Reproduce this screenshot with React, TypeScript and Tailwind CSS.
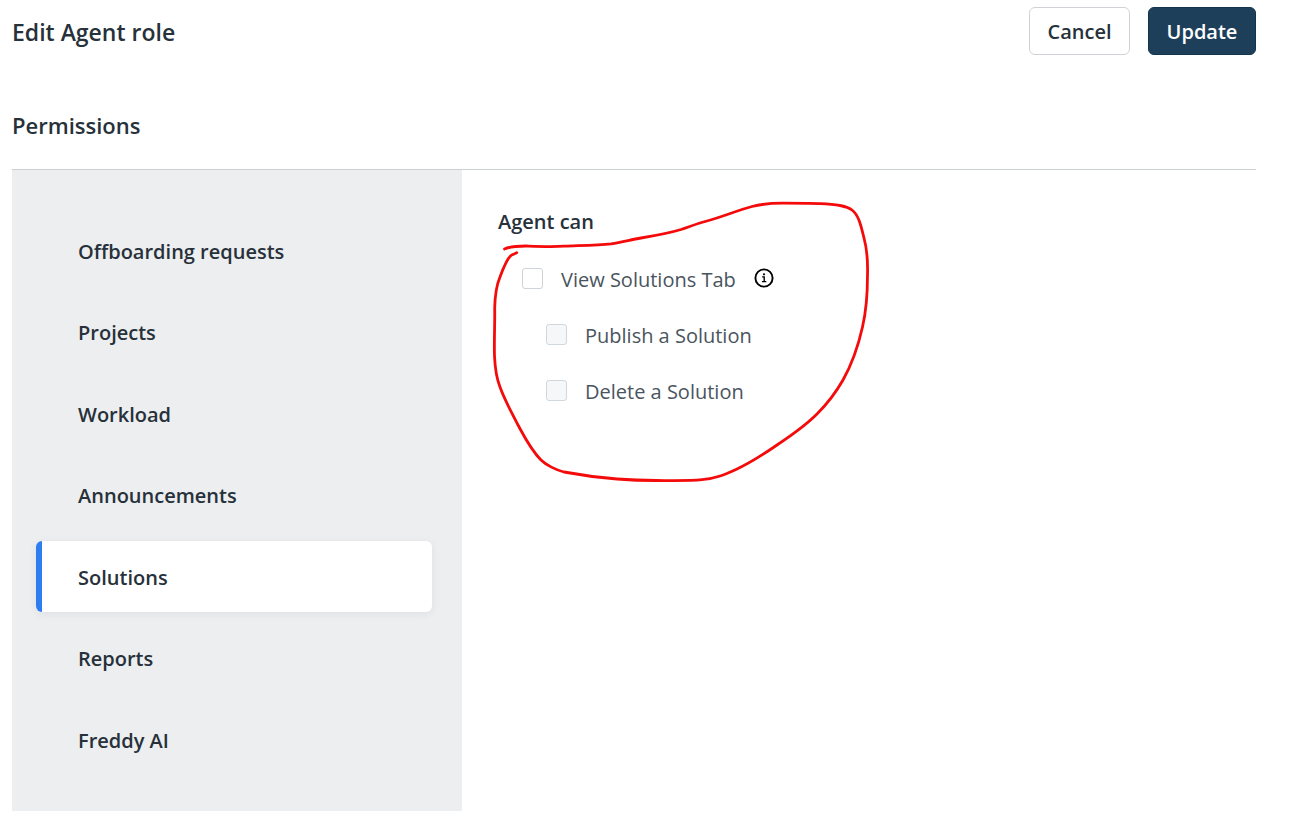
import React from 'react';

const sections = [
  'Offboarding requests',
  'Projects',
  'Workload',
  'Announcements',
  'Solutions',
  'Reports',
  'Freddy AI',
];

function InfoIcon() {
  return (
    <svg viewBox="0 0 20 20" className="size-5" fill="none" stroke="#000" aria-hidden="true">
      <circle cx="10" cy="10" r="8.6" strokeWidth="1.9" />
      <path d="M8.1 8.9h2.1v4.6M7.9 13.6h4.4" strokeWidth="1.4" />
      <circle cx="10" cy="6.3" r="1.1" fill="#000" stroke="none" />
    </svg>
  );
}

function HandDrawnLoop() {
  return (
    <svg
      viewBox="488 198 386 290"
      className="pointer-events-none absolute top-7 left-[26px] h-[290px] w-[386px]"
      fill="none"
      stroke="#f40a0a"
      strokeWidth="2.8"
      strokeLinecap="round"
      strokeLinejoin="round"
      aria-hidden="true"
    >
      <path d="M504.500 249C510 246.500 517 246 526 246C540 246.500 552 247 564 246.200C580 245.500 598 245.300 611 243.800C622 242 630 240 641 238C656 235.500 668 233.500 681 229.500C690 226.500 697 223.500 707 221C722 217 737 210.500 752 206.500C762 203.800 772 203.200 783 203.200C796 203.200 808 203.400 820 203.600C836 204.300 846 205.500 852 210C859 215.500 861 226 864 238C867 249 868 258 867.500 275C867.500 295 866 312 862.500 327C858 347 852 364 843 380C835 394 826 405 817 414C806 425 792 435 777 445C764 454 751 462.500 736 469.500C725 474.500 716 478.500 702 479.700C690 481 675 480.600 656 480.500C641 480.500 630 480 617 479C598 477.500 580 475 564 472C556 470 546 465 541 460C531 450 525 438 518 425C512 413 505 401 500 387C496 377 495 367 494.500 356C494 340 495 322 494.700 308C495 295 497 284 500 277C504 266 507 259 511 255.500C513 254 515 254 516.800 252.700" />
    </svg>
  );
}

function Permission({
  id,
  label,
  disabled = false,
  children,
}: {
  id: string;
  label: string;
  disabled?: boolean;
  children?: React.ReactNode;
}) {
  return (
    <div className={disabled ? 'flex h-7 items-start pl-12' : 'flex h-7 items-start pl-6'}>
      <input
        id={id}
        type="checkbox"
        disabled={disabled}
        className="mt-0.5 size-[21px] shrink-0 appearance-none rounded-[3px] border border-[#cfd3da] bg-white checked:bg-[#2c7be5] disabled:border-[#cfd7df] disabled:bg-[#f5f7f9]"
      />
      <label htmlFor={id} className="pl-[18px] text-xl leading-7 text-[#4a545e]">
        {label}
      </label>
      {children}
    </div>
  );
}

export default function App() {
  return (
    <main className="min-h-screen bg-white pr-[33px] pb-2.5 pl-3 font-['Open_Sans','Noto_Sans',sans-serif] text-[#27313a]">
      <header className="flex items-start justify-between pt-[7px]">
        <h1 className="pt-[9px] text-[23px] leading-8 font-semibold">Edit Agent role</h1>
        <div className="flex gap-[18px]">
          <button
            type="button"
            className="h-12 w-[101px] rounded-md border border-[#cfd3d7] bg-white pt-0.5 text-xl font-semibold"
          >
            Cancel
          </button>
          <button
            type="button"
            className="h-12 w-[108px] rounded-md border border-[#12344d] bg-[#1d3f5a] pt-0.5 text-xl font-semibold text-white"
          >
            Update
          </button>
        </div>
      </header>

      <h2 className="border-b border-[#cbd0d0] pt-[54px] pb-7 text-[22px] leading-8 font-semibold">
        Permissions
      </h2>

      <div className="flex">
        <nav
          aria-label="Permission groups"
          className="w-[450px] shrink-0 bg-[#edeef0] pt-[45px] pr-[30px] pb-9 pl-6"
        >
          <ul className="flex h-[560px] flex-col justify-between">
            {sections.map((name) => (
              <li key={name}>
                <a
                  href={'#' + name.toLowerCase().replace(' ', '-')}
                  aria-current={name === 'Solutions' ? 'page' : undefined}
                  className={
                    name === 'Solutions'
                      ? 'flex h-[71px] items-center rounded-md border-l-6 border-[#2c7ef0] bg-white pt-0.5 pl-9 text-xl font-semibold shadow-[0_2px_8px_rgba(39,49,90,0.07)]'
                      : 'flex h-[71px] items-center border-l-6 border-transparent pt-0.5 pl-9 text-xl font-semibold'
                  }
                >
                  {name}
                </a>
              </li>
            ))}
          </ul>
        </nav>

        <section aria-labelledby="agent-can" className="relative grow pt-[38px] pl-9">
          <h3 id="agent-can" className="text-xl leading-7 font-semibold">
            Agent can
          </h3>
          <div className="flex flex-col gap-7 pt-[30px]">
            <Permission id="view-solutions" label="View Solutions Tab">
              <button type="button" aria-label="About View Solutions Tab" className="mt-0.5 ml-[18px]">
                <InfoIcon />
              </button>
            </Permission>
            <Permission id="publish-solution" label="Publish a Solution" disabled />
            <Permission id="delete-solution" label="Delete a Solution" disabled />
          </div>
          <HandDrawnLoop />
        </section>
      </div>
    </main>
  );
}
